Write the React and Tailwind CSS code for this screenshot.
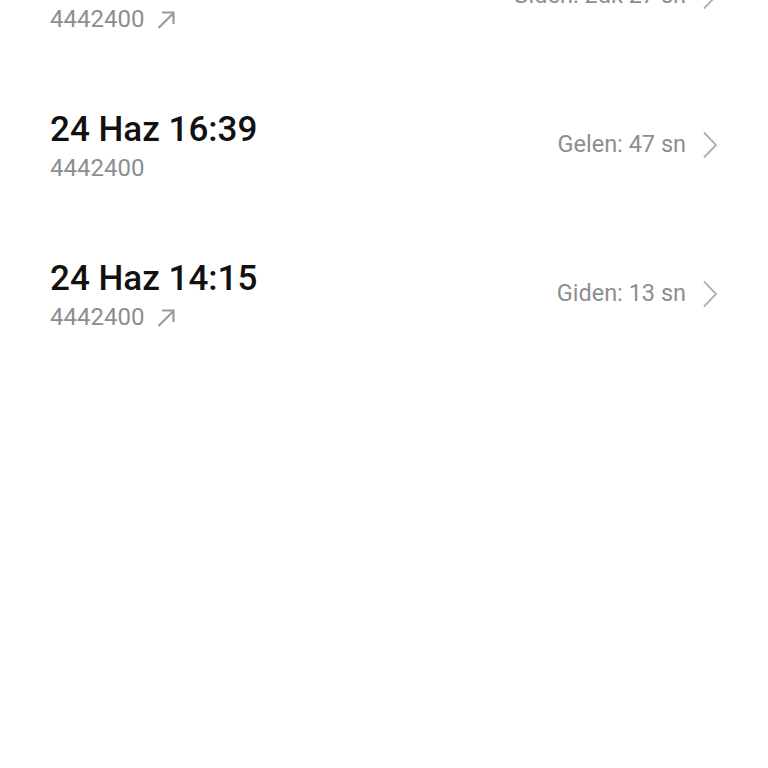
import React from "react";

const calls = [
  { time: "24 Haz 17:02", number: "4442400", outgoing: true, label: "Giden: 2dk 27 sn" },
  { time: "24 Haz 16:39", number: "4442400", outgoing: false, label: "Gelen: 47 sn" },
  { time: "24 Haz 14:15", number: "4442400", outgoing: true, label: "Giden: 13 sn" },
];

function OutArrow() {
  return (
    <svg width="20" height="22" viewBox="0 0 20 22" fill="none" className="ml-[12px]">
      <path d="M2.5 20 L17 5.5" stroke="#999999" strokeWidth="2.2" />
      <path d="M6 4.5 H17.5 V16" stroke="#999999" strokeWidth="2.2" />
    </svg>
  );
}

function Chevron() {
  return (
    <svg width="16" height="28" viewBox="0 0 16 28" fill="none" className="ml-[16px]">
      <path d="M2 1.5 L14 14 L2 26.5" stroke="#b3b3b3" strokeWidth="2" />
    </svg>
  );
}

export default function App() {
  return (
    <div className="min-h-[768px] bg-white overflow-hidden" style={{ fontFamily: "Roboto, 'Noto Sans', sans-serif" }}>
      <div className="-mt-[78px]">
        {calls.map((c, i) => (
          <div key={i} className="h-[149px] flex items-center pl-[50px] pr-[50px]">
            <div className="flex-1 flex flex-col">
              <div className="text-[35px] leading-[40px] font-medium text-[#111111]">{c.time}</div>
              <div className="mt-[4px] flex items-center text-[24px] leading-[28px] text-[#8e8e8e]">
                {c.number}
                {c.outgoing && <OutArrow />}
              </div>
            </div>
            <div className="flex items-center mt-[-1px]">
              <span className="text-[23.5px] text-[#8e8e8e]">{c.label}</span>
              <Chevron />
            </div>
          </div>
        ))}
      </div>
    </div>
  );
}
